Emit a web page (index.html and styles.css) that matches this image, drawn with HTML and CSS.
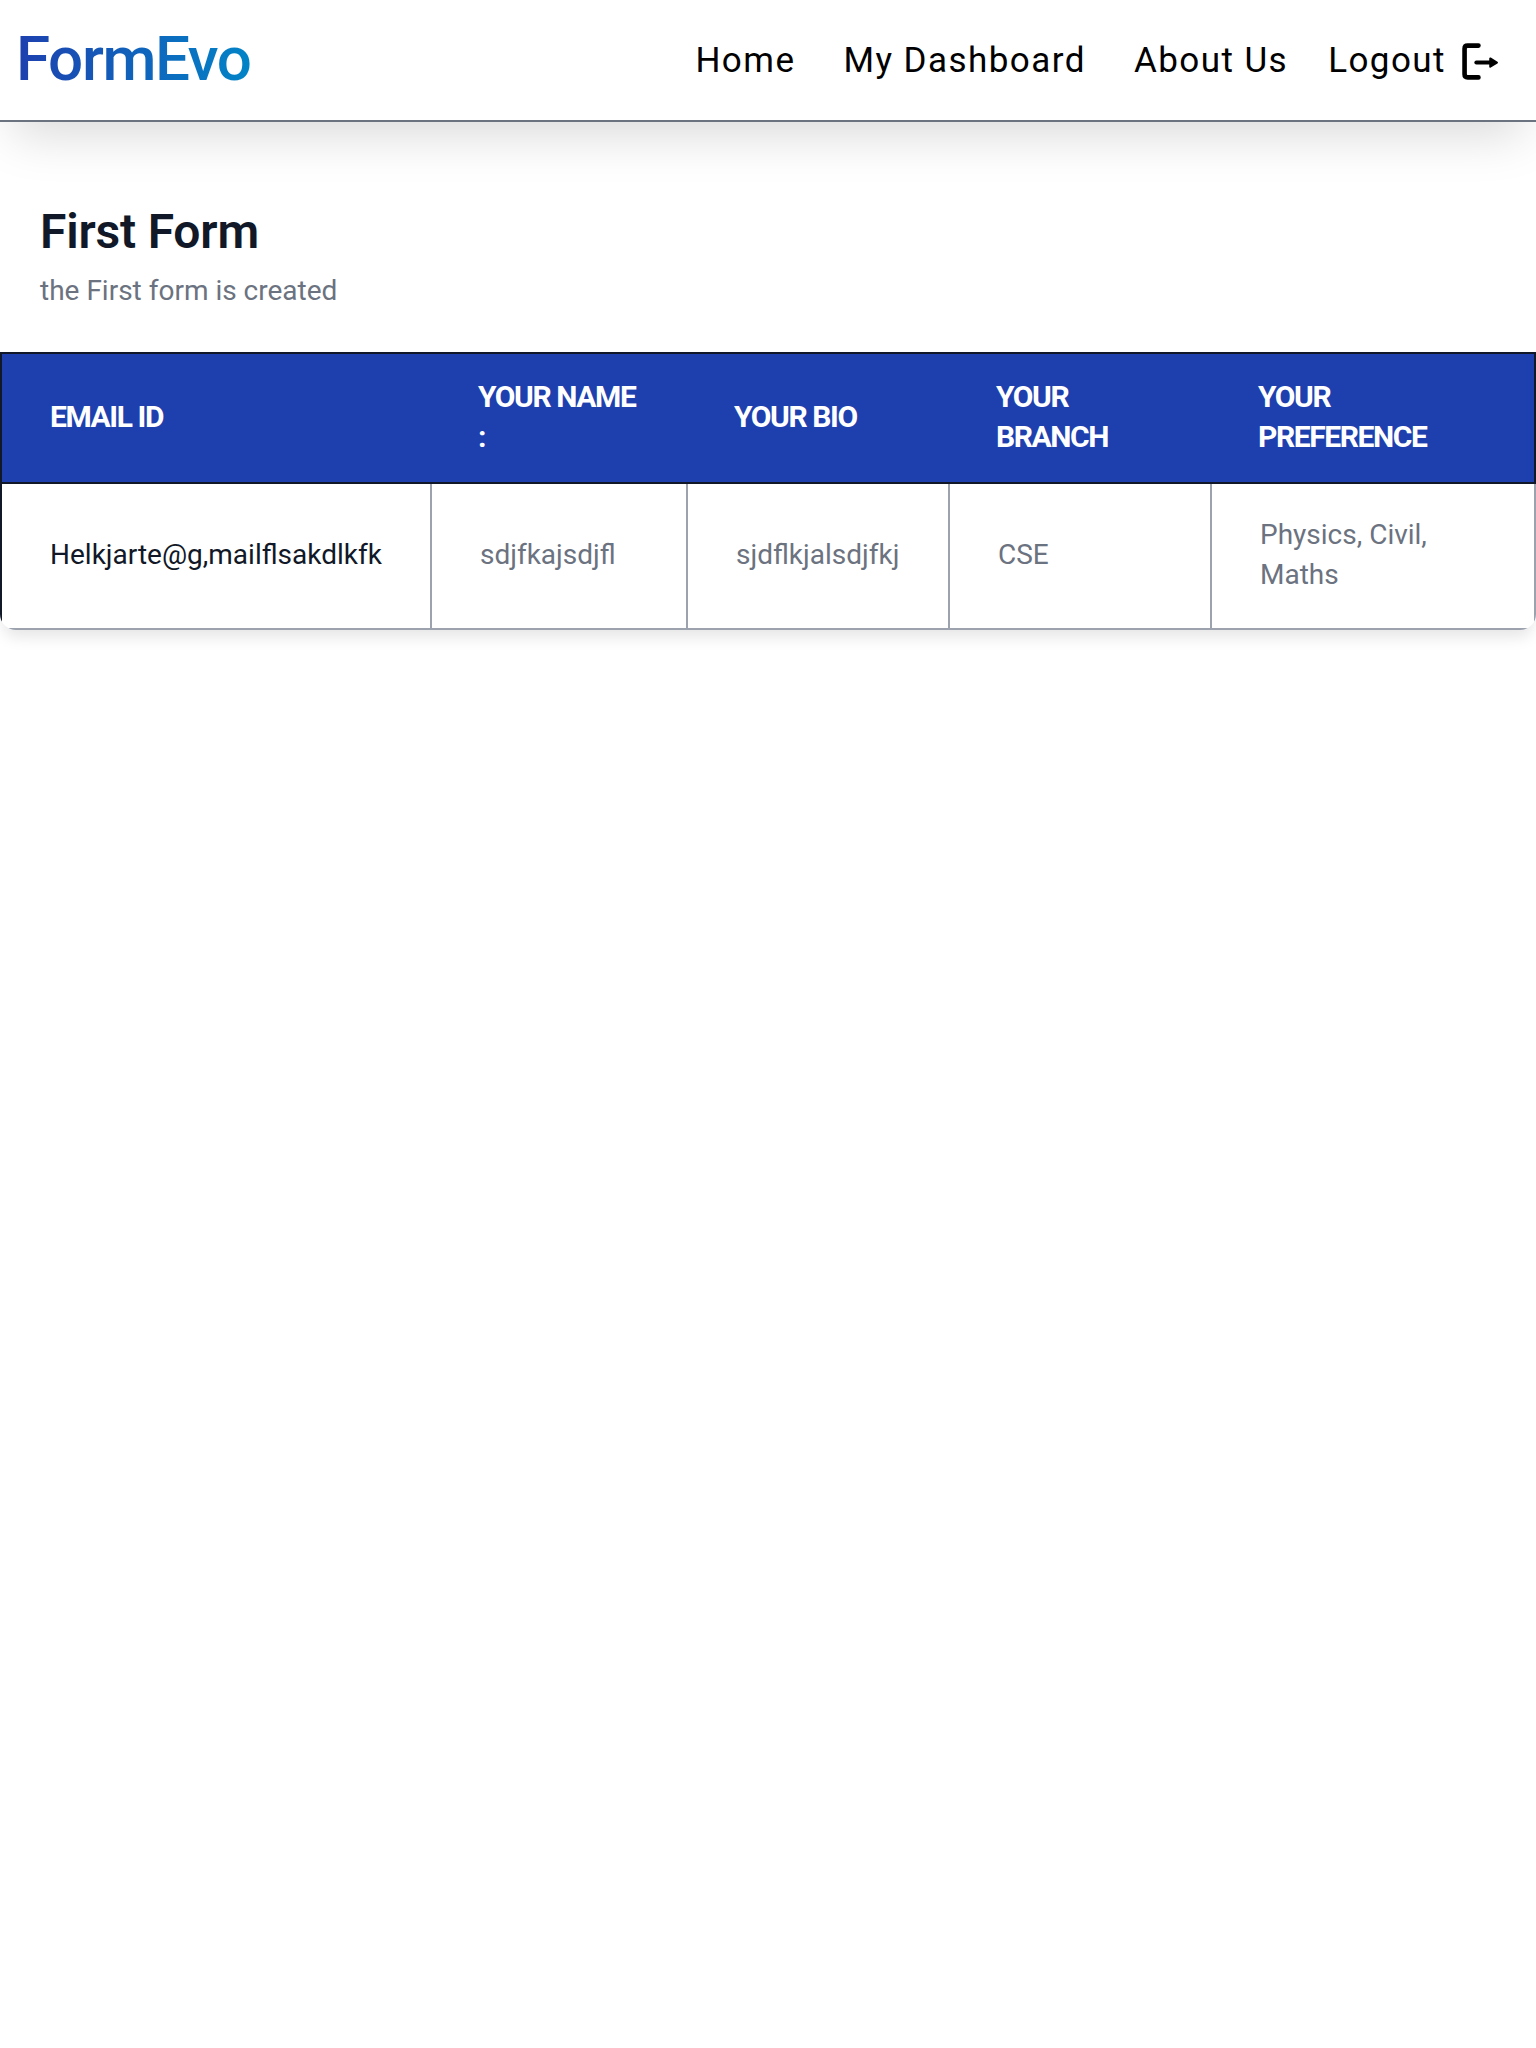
FILE: index.html
```html
<!DOCTYPE html>
<html lang="en">
<head>
    <meta charset="UTF-8">
    <meta name="viewport" content="width=device-width, initial-scale=1.0">
    <title>FormEvo</title>
    <link rel="stylesheet" href="styles.css">
</head>
<body>
    <nav class="navbar">
        <a class="logo">FormEvo</a>
        <div class="nav-links">
            <a class="nav-link">Home</a>
            <a class="nav-link">My Dashboard</a>
            <a class="nav-link">About Us</a>
            <a class="nav-link logout">Logout
                <svg class="logout-icon" viewBox="0 0 36 36" fill="none" stroke="#000" stroke-width="4.5" stroke-linecap="round" stroke-linejoin="round">
                    <path d="M16 2.5H5.5Q2.5 2.5 2.5 5.5V30.5Q2.5 33.5 5.5 33.5H16"/>
                    <path d="M14 19H28" stroke-width="4"/>
                    <path d="M27.5 15L34 19L27.5 23Z" fill="#000" stroke-width="2"/>
                </svg>
            </a>
        </div>
    </nav>

    <header class="form-header">
        <h1>First Form</h1>
        <p>the First form is created</p>
    </header>

    <div class="table-wrap">
        <table class="responses">
            <thead>
                <tr>
                    <th class="col-email">Email ID</th>
                    <th class="col-name">Your Name :</th>
                    <th class="col-bio">Your Bio</th>
                    <th class="col-branch">Your Branch</th>
                    <th class="col-pref">Your Preference</th>
                </tr>
            </thead>
            <tbody>
                <tr>
                    <td class="email">Helkjarte@g,mailflsakdlkfk</td>
                    <td>sdjfkajsdjfl</td>
                    <td>sjdflkjalsdjfkj</td>
                    <td>CSE</td>
                    <td>Physics, Civil, Maths</td>
                </tr>
            </tbody>
        </table>
    </div>
</body>
</html>
```

FILE: styles.css
```css
* {
    box-sizing: border-box;
    margin: 0;
    padding: 0;
}

body {
    font-family: Roboto, "Liberation Sans", sans-serif;
    background: #fff;
    color: #111827;
    min-height: 100vh;
}

.navbar {
    display: flex;
    justify-content: space-between;
    align-items: center;
    height: 122px;
    padding: 0 37px 0 16px;
    border-bottom: 2px solid #6b7280;
    box-shadow: 0 25px 50px -12px rgba(0, 0, 0, 0.15);
}

.logo {
    font-size: 62px;
    font-weight: 500;
    letter-spacing: -1.4px;
    padding-bottom: 3px;
    background: linear-gradient(90deg, #1e40af, #0284c7);
    -webkit-background-clip: text;
    background-clip: text;
    color: transparent;
}

.nav-links {
    display: flex;
    align-items: center;
    font-size: 35px;
    letter-spacing: 1.45px;
    color: #000;
}

.nav-link {
    margin-left: 48px;
}

.logout {
    display: flex;
    align-items: center;
    gap: 16px;
    margin-left: 40px;
}

.logout-icon {
    width: 37px;
    height: 37px;
    margin-top: 2px;
}

.form-header {
    padding: 78px 40px 41px;
}

.form-header h1 {
    font-size: 48px;
    font-weight: 600;
    letter-spacing: -0.2px;
    line-height: 64px;
    color: #111827;
}

.form-header p {
    font-size: 28px;
    line-height: 40px;
    margin-top: 7px;
    color: #6b7280;
}

.table-wrap {
    border-radius: 0 0 16px 16px;
    overflow: hidden;
    box-shadow: 0 10px 15px -3px rgba(0, 0, 0, 0.1);
}

.responses {
    width: 100%;
    table-layout: fixed;
    border-collapse: separate;
    border-spacing: 0;
    font-size: 28px;
    line-height: 40px;
}

.responses th {
    height: 132px;
    padding: 0 48px 2px;
    text-align: left;
    text-transform: uppercase;
    font-size: 30px;
    font-weight: 700;
    letter-spacing: -1.4px;
    color: #fff;
    background: #1e40af;
    border-top: 2px solid #111827;
    border-bottom: 2px solid #111827;
}

.responses th:first-child {
    border-left: 2px solid #111827;
}

.responses th:last-child {
    border-right: 2px solid #111827;
}

.col-email { width: 430px; }
.col-name { width: 256px; }
.col-bio { width: 262px; }
.col-branch { width: 262px; }

.responses td {
    height: 146px;
    padding: 0 48px 2px;
    color: #6b7280;
    border-left: 2px solid #9ca3af;
    border-bottom: 2px solid #9ca3af;
}

.responses td:first-child {
    border-left-color: #111827;
}

.responses td:last-child {
    border-right: 2px solid #9ca3af;
}

.responses td.email {
    color: #111827;
}
```
